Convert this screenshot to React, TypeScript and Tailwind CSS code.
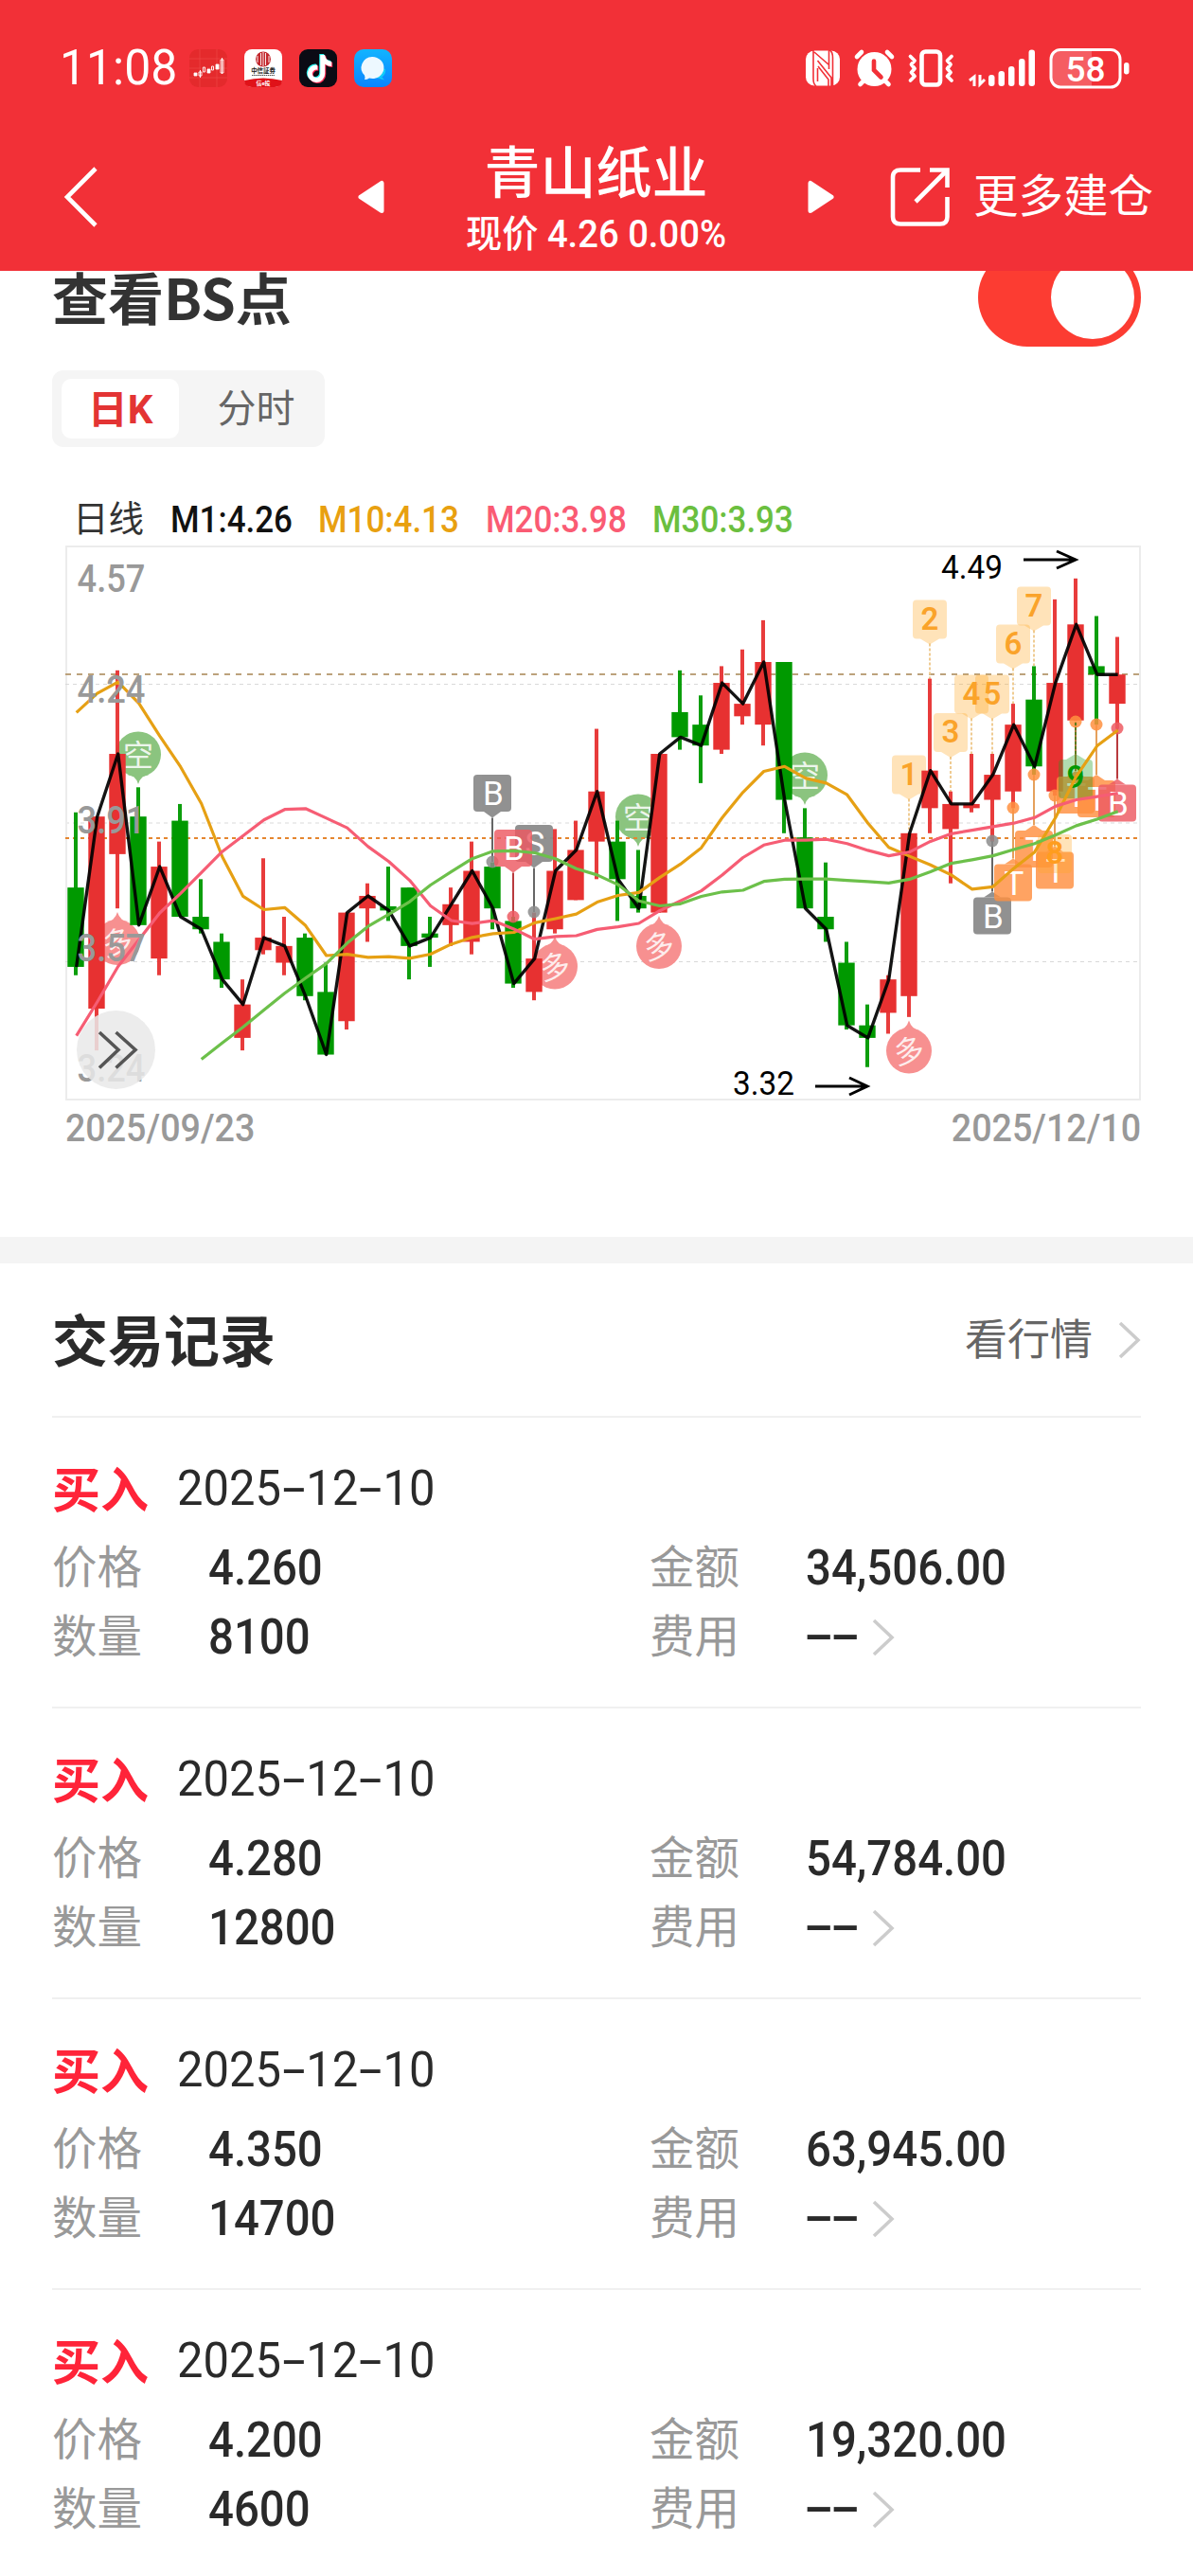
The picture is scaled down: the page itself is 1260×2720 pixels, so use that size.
import { FaTiktok } from "react-icons/fa6"

type Candle = [high: number, open: number, close: number, low: number]

// [high, open, close, low], one entry per trading day
const candles: Candle[] = [
  [3.93, 3.75, 3.56, 3.54], [3.92, 3.46, 3.92, 3.36], [4.27, 3.83, 4.07, 3.7], [3.99, 3.92, 3.66, 3.66],
  [3.86, 3.58, 3.8, 3.54], [3.95, 3.91, 3.68, 3.68], [3.77, 3.68, 3.65, 3.64], [3.64, 3.62, 3.53, 3.51],
  [3.53, 3.39, 3.47, 3.36], [3.82, 3.6, 3.63, 3.59], [3.68, 3.57, 3.61, 3.54], [3.64, 3.63, 3.49, 3.48],
  [3.57, 3.5, 3.35, 3.35], [3.69, 3.43, 3.69, 3.41], [3.76, 3.7, 3.73, 3.62], [3.8, 3.705, 3.695, 3.67],
  [3.75, 3.75, 3.61, 3.53], [3.68, 3.64, 3.63, 3.56], [3.75, 3.66, 3.71, 3.61], [3.86, 3.62, 3.79, 3.59],
  [3.81, 3.8, 3.7, 3.65], [3.68, 3.67, 3.52, 3.51], [3.69, 3.5, 3.58, 3.48], [3.89, 3.65, 3.79, 3.64],
  [3.91, 3.72, 3.84, 3.72], [4.13, 3.86, 3.98, 3.77], [3.91, 3.86, 3.77, 3.67], [3.84, 3.73, 3.7, 3.69],
  [4.07, 3.69, 4.07, 3.69], [4.27, 4.17, 4.11, 4.08], [4.21, 4.14, 4.09, 4.0], [4.28, 4.08, 4.24, 4.07],
  [4.32, 4.16, 4.19, 4.14], [4.39, 4.14, 4.29, 4.09], [4.29, 4.29, 3.96, 3.88], [3.94, 3.87, 3.7, 3.7],
  [3.81, 3.68, 3.65, 3.62], [3.62, 3.57, 3.42, 3.41], [3.47, 3.42, 3.39, 3.32], [3.54, 3.45, 3.53, 3.4],
  [3.88, 3.49, 3.88, 3.44], [4.25, 3.94, 4.03, 3.88], [3.98, 3.89, 3.95, 3.76], [4.07, 3.94, 3.95, 3.93],
  [4.07, 3.96, 4.02, 3.86], [4.19, 3.98, 4.14, 3.94], [4.28, 4.2, 4.04, 4.02], [4.44, 3.98, 4.24, 3.97],
  [4.49, 4.15, 4.38, 4.15], [4.4, 4.28, 4.26, 4.14], [4.35, 4.19, 4.26, 4.13],
]

// averages for the days whose window starts before the first candle
const ma10Head = [4.169, 4.215, 4.242, 4.191, 4.113, 4.039, 3.951, 3.824, 3.729]
const ma20Head = [
  3.395, 3.476, 3.561, 3.625, 3.689, 3.736, 3.786, 3.836, 3.874, 3.912, 3.937, 3.939, 3.916, 3.893, 3.848, 3.812,
  3.767, 3.706, 3.671,
]
const ma30Head = [
  3.339, 3.378, 3.416, 3.457, 3.497, 3.533, 3.568, 3.617, 3.657, 3.686, 3.716, 3.756, 3.788, 3.819, 3.837, 3.838,
  3.833, 3.819, 3.795, 3.78, 3.757, 3.718, 3.706,
]

const cx = (i: number) => 11 + i * 22
const py = (p: number) => 34.8 + (4.49 - p) * 441

const average = (n: number) =>
  candles.slice(n - 1).map((_, i) => candles.slice(i, i + n).reduce((sum, c) => sum + c[2], 0) / n)

const points = (values: number[], start = 0) =>
  values.map((v, i) => `${cx(i + start) + 0.7},${py(v).toFixed(1)}`).join(" ")

const closeLine = points(candles.map((c) => c[2]))
const ma10 = points([...ma10Head, ...average(10)])
const ma20 = points([...ma20Head, ...average(20)])
const ma30 = points([...ma30Head, ...average(30)], 6)

const GREY = "#8c8c8c"
const ROSE = "#ed5a62"
const ORANGE = "#ff9040"

type PinData = { i: number; label: string; color: string; line: string; dot: number; box: number; up?: boolean }

const pins: PinData[] = [
  { i: 20, label: "B", color: GREY, line: "#666", dot: 334, box: 242 },
  { i: 22, label: "S", color: GREY, line: "#666", dot: 387, box: 295 },
  { i: 21, label: "B", color: ROSE, line: "#b83a3e", dot: 392, box: 300 },
  { i: 44, label: "B", color: GREY, line: "#666", dot: 312, box: 371.5, up: true },
  { i: 45, label: "T", color: ORANGE, line: "#e5a05c", dot: 277, box: 336.5, up: true },
  { i: 46, label: "T", color: ORANGE, line: "#e5a05c", dot: 242, box: 301, up: true },
  { i: 47, label: "T", color: ORANGE, line: "#e5a05c", dot: 264, box: 323.5, up: true },
  { i: 48, label: "T", color: ORANGE, line: "#a5763a", dot: 186, box: 244, up: true },
  { i: 49, label: "T", color: ORANGE, line: "#e5a05c", dot: 189, box: 248, up: true },
  { i: 50, label: "B", color: ROSE, line: "#b83a3e", dot: 193, box: 252.5, up: true },
]

const counts = [
  { i: 40, n: 1, top: 221.5, to: 300 },
  { i: 41, n: 2, top: 57.5, to: 141 },
  { i: 42, n: 3, top: 177, to: 260 },
  { i: 43, n: 4, top: 136.5, to: 220 },
  { i: 44, n: 5, top: 136.5, to: 220 },
  { i: 45, n: 6, top: 83.5, to: 167 },
  { i: 46, n: 7, top: 43.5, to: 127 },
]

// tip: the point of the drop, in chart coordinates
const balloons = [
  { i: 3, label: "空", tip: 252 },
  { i: 27, label: "空", tip: 318 },
  { i: 35, label: "空", tip: 274 },
  { i: 2, label: "多", tip: 387 },
  { i: 23, label: "多", tip: 412.5 },
  { i: 28, label: "多", tip: 391 },
  { i: 40, label: "多", tip: 501.5 },
]

const records = [
  { date: ["2025", "12", "10"], price: "4.260", amount: "34,506.00", volume: "8100" },
  { date: ["2025", "12", "10"], price: "4.280", amount: "54,784.00", volume: "12800" },
  { date: ["2025", "12", "10"], price: "4.350", amount: "63,945.00", volume: "14700" },
  { date: ["2025", "12", "10"], price: "4.200", amount: "19,320.00", volume: "4600" },
]

function Pin({ i, label, color, line, dot, box, up }: PinData) {
  const x = cx(i)
  const tip = up ? box - 6 : box + 45.5
  const base = up ? box : box + 39
  return (
    <g>
      <line x1={x} x2={x} y1={dot} y2={tip} stroke={line} strokeWidth="2" />
      <circle cx={x} cy={dot} r="6.5" fill={color} opacity="0.85" />
      <g fill={color} opacity={color === GREY ? 0.95 : 0.82}>
        <rect x={x - 20} y={box} width="40" height="39" rx="4" />
        <path d={`M${x - 9} ${base}L${x} ${tip}L${x + 9} ${base}Z`} />
      </g>
      <text x={x + 1} y={box + 32} fontSize="35" fill="#fff" textAnchor="middle">
        {label}
      </text>
    </g>
  )
}

function Balloon({ i, label, tip }: { i: number; label: string; tip: number }) {
  const x = cx(i)
  const down = label === "空"
  const cy = down ? tip - 31.5 : tip + 32
  const edge = down ? tip - 10 : tip + 10
  return (
    <g fill={down ? "#8bc47f" : "#f79090"}>
      <circle cx={x} cy={cy} r="24" />
      <path d={`M${x - 12} ${edge}Q${x - 3} ${edge} ${x} ${tip}Q${x + 3} ${edge} ${x + 12} ${edge}Z`} />
      <text
        x={x}
        y={cy + 12}
        fontSize="32"
        fill="#fff"
        fillOpacity="0.85"
        textAnchor="middle"
        transform={down ? undefined : `rotate(-12 ${x} ${cy})`}
      >
        {label}
      </text>
    </g>
  )
}

function KLineChart() {
  return (
    <svg className="block h-[588px] w-[1138px]" viewBox="-1 -1 1138 588" fill="none">
      <rect x="1" y="1" width="1134" height="584" stroke="#ececec" strokeWidth="2" />

      <g strokeWidth="1">
        <path d="M0 146.5H1134M0 439.5H1134" stroke="#d9d9d9" strokeDasharray="4 4" />
        <path d="M0 293H1134" stroke="#ececec" strokeWidth="2" strokeDasharray="4 4" />
      </g>

      {balloons.map((b) => (
        <Balloon key={`${b.label}${b.i}`} {...b} />
      ))}

      <path d="M0 136H1134" stroke="#bca27c" strokeWidth="2" strokeDasharray="6 6" />
      <path d="M0 309H1134" stroke="#e5862f" strokeWidth="2" strokeDasharray="4 4" />

      {counts.map(({ i, n, top, to }) => (
        <g key={n}>
          <path d={`M${cx(i)} ${top + 46}V${to}`} stroke="#efcb92" strokeWidth="2" strokeDasharray="3 2" />
          <path
            d={`M${cx(i) - 14} ${top}h28q4 0 4 4v33q0 4-4 4h-4l-10 6l-10-6h-4q-4 0-4-4v-33q0-4 4-4z`}
            fill="#ffa726"
            fillOpacity="0.32"
          />
          <text x={cx(i)} y={top + 31} fontSize="33" fontWeight="600" fill="#faa32a" textAnchor="middle">
            {n}
          </text>
        </g>
      ))}

      {candles.map(([high, open, close, low], i) => {
        const color = close >= open ? "#e73131" : "#009900"
        const top = py(Math.max(open, close))
        return (
          <g key={i} fill={color}>
            <rect x={cx(i) - 2} y={py(high)} width="4" height={py(low) - py(high)} opacity="0.95" />
            <rect x={cx(i) - 8.7} y={top} width="17.4" height={Math.max(4, py(Math.min(open, close)) - top)} />
          </g>
        )
      })}

      {pins.map((p) => (
        <Pin key={p.i} {...p} />
      ))}

      {/* 8 and 9 sit below their candles */}
      <path d="M1031 305h28q4 0 4 4v33q0 4-4 4h-28q-4 0-4-4v-33q0-4 4-4z" fill="#ffa726" fillOpacity="0.32" />
      <text x="1045" y="336" fontSize="33" fontWeight="600" fill="#ff9d1e" textAnchor="middle">
        8
      </text>
      <path d="M1067 187V220" stroke="#5d7a1d" strokeWidth="2" strokeDasharray="3 2" />
      <path
        d="M1053 226h4l10-6l10 6h4q4 0 4 4v33q0 4-4 4h-28q-4 0-4-4v-33q0-4 4-4z"
        fill="#1e9e1e"
        fillOpacity="0.35"
      />
      <text x="1067" y="256" fontSize="33" fontWeight="600" fill="#009900" textAnchor="middle">
        9
      </text>

      <g strokeLinejoin="round">
        <polyline points={closeLine} stroke="#000" strokeOpacity="0.92" strokeWidth="3.4" />
        <polyline points={ma10} stroke="#e6a014" strokeWidth="3.2" />
        <polyline points={ma20} stroke="#f65d74" strokeWidth="3.2" />
        <polyline points={ma30} stroke="#6cc04a" strokeWidth="3.2" />
      </g>

      <g fontSize="40" fontWeight="500" fill="#999">
        <text x="12.5" y="48.5" textLength="72" lengthAdjust="spacingAndGlyphs">4.57</text>
        <text x="12.5" y="165.5" textLength="72" lengthAdjust="spacingAndGlyphs">4.24</text>
        <text x="12.5" y="303.5" textLength="72" lengthAdjust="spacingAndGlyphs">3.91</text>
        <text x="12.5" y="439" textLength="72" lengthAdjust="spacingAndGlyphs">3.57</text>
        <text x="12.5" y="565.5" textLength="72" lengthAdjust="spacingAndGlyphs">3.24</text>
      </g>

      <g fontSize="35" fill="#000">
        <text x="925" y="35" textLength="65" lengthAdjust="spacingAndGlyphs">4.49</text>
        <text x="705" y="579.5" textLength="65" lengthAdjust="spacingAndGlyphs">3.32</text>
      </g>
      <path d="M1012 15H1067M1047 6L1067 15L1047 24M792 571H847M828 562L847 571L828 580" stroke="#000" strokeWidth="3" />

      <circle cx="53.5" cy="532.5" r="41.5" fill="#e9e9e9" fillOpacity="0.85" />
      <path d="M36 514L56 532.5L36 551.5M53.5 514L74 532.5L53.5 551.5" stroke="#555" strokeWidth="3.6" />
    </svg>
  )
}

function StatusIcons() {
  return (
    <svg className="block h-11 w-[344px]" viewBox="850 50 344 44" fill="#fff">
      {/* nfc */}
      <rect x="851" y="53.500" width="36" height="37" rx="9" />
      <path
        d="M859 53V83Q859 89 862 91M860 55L875.500 68.500M863.500 64L878 82V91M863.500 72V86M864 70L875 84V91M875.500 53V73M879.500 91V61Q879.500 55 876.500 53"
        stroke="#f23037"
        strokeWidth="1.600"
        fill="none"
      />
      {/* alarm */}
      <circle cx="923.5" cy="73" r="18" />
      <path d="M905 60l5-5M942 60l-5-5M908.500 89l5-5M938.500 89l-5-5" stroke="#fff" strokeWidth="4.600" strokeLinecap="round" />
      <path d="M923 64.500v9.500l7.500 7.500" stroke="#f23037" strokeWidth="4.600" fill="none" strokeLinecap="round" />
      {/* vibrate */}
      <rect x="973.500" y="54.500" width="19.500" height="35" rx="4" fill="none" stroke="#fff" strokeWidth="4.600" />
      <path
        d="M961.500 59.500l4.500 4.500l-3.500 4l3.500 4.500l-3.500 4l3.500 4l-4.500 4.500M1005 59.500l-4.500 4.500l3.500 4l-3.500 4.500l3.500 4l-3.500 4l4.500 4.500"
        fill="none"
        stroke="#fff"
        strokeWidth="3.800"
        strokeLinecap="round"
        strokeLinejoin="round"
      />
      {/* signal */}
      <path d="M1024 85l5-4v10M1040 84l-5 5V79" fill="none" stroke="#fff" strokeWidth="3" />
      <rect x="1044" y="79" width="6.500" height="12" rx="3" />
      <rect x="1054.500" y="75" width="6.500" height="16" rx="3" />
      <rect x="1065" y="70" width="6.500" height="21" rx="3" />
      <rect x="1076" y="62" width="6.500" height="29" rx="3" />
      <rect x="1086.500" y="52.500" width="6.500" height="38.500" rx="3" />
      {/* battery */}
      <path d="M1153 53h-33q-10 0-10 10v18q0 10 10 10h33z" fillOpacity="0.22" />
      <rect x="1110" y="52.500" width="73" height="39.500" rx="10" fill="none" stroke="#fff" strokeWidth="3" />
      <rect x="1187" y="66" width="5.500" height="12.500" rx="2.700" />
      <text x="1146.500" y="86" fontSize="37" fontWeight="500" textAnchor="middle">
        58
      </text>
    </svg>
  )
}

function AppIcons() {
  return (
    <div className="flex gap-[18px]">
      <svg className="size-10" viewBox="0 0 40 40" fill="none">
        <rect width="40" height="40" rx="9" fill="#e42a2c" />
        <path d="M0 10H40M0 20H40M0 30H40M11 0V40M29 0V40" stroke="#f04a4a" strokeWidth="0.6" />
        <path d="M5 25h3v3H5zM19 21h3v4h-3zM28 16h3v5h-3z" fill="#fff" stroke="#fff" strokeWidth="0.8" />
        <path d="M10 24h3v4h-3zM14.500 19h2v5h-2zM23.500 18h2v4h-2zM33 11h3v14h-3zM11.500 22v8M34.500 9v17" stroke="#fff" strokeWidth="0.9" />
      </svg>
      <svg className="size-10" viewBox="0 0 40 40" fill="none">
        <rect width="40" height="40" rx="8" fill="#fff" />
        <path d="M0 33Q20 28 40 33Q40 40 32 40H8Q0 40 0 33Z" fill="#e01219" />
        <circle cx="20" cy="10.500" r="8" fill="#c3272d" />
        <path d="M17.500 4v13M20 3v15M22.500 4v13M14 7v7M26 7v7" stroke="#fff" strokeWidth="0.9" />
        <text x="20" y="25" fontSize="6.400" fontWeight="700" fill="#222" textAnchor="middle">中信証券</text>
        <path d="M8 27.500H32" stroke="#555" strokeWidth="1" strokeDasharray="1.500 0.600" />
        <text x="20" y="37.500" fontSize="6" fontWeight="700" fill="#fff" textAnchor="middle">信e投</text>
      </svg>
      <div className="relative size-10 rounded-[9px] bg-[#0b0b14]">
        <FaTiktok className="absolute left-[6px] top-[5px] size-[29px] text-[#25f4ee]" />
        <FaTiktok className="absolute left-[8px] top-[7px] size-[29px] text-[#fe2c55]" />
        <FaTiktok className="absolute left-[7px] top-[6px] size-[29px] text-white" />
      </div>
      <svg className="size-10" viewBox="0 0 40 40">
        <defs>
          <linearGradient id="chat" x1="0" y1="0" x2="0" y2="1">
            <stop offset="0" stopColor="#12b4ff" />
            <stop offset="1" stopColor="#0a84ff" />
          </linearGradient>
        </defs>
        <rect width="40" height="40" rx="10" fill="url(#chat)" />
        <path d="M24 30.500a8 8 0 0 0 9-9.500l-4-1l-6 10zM29 29l3 3.500l-5-1.500z" fill="#12cdf9" />
        <path d="M19 8a12 11.500 0 1 1-3 22.500q-2 1.500-5 1.500q1-2 0-4.500A12 11.500 0 0 1 19 8z" fill="#edf8ff" />
      </svg>
    </div>
  )
}

function Header() {
  return (
    <header className="relative z-10 h-[286px] bg-[#f23037] text-white">
      <div className="flex h-[144px] items-center pl-[63px] pr-[66px]">
        <span className="w-[137px] origin-left scale-x-[0.96] text-[52px] leading-none">11:08</span>
        <AppIcons />
        <div className="ml-auto">
          <StatusIcons />
        </div>
      </div>

      <div className="flex h-[128px] items-center pl-[67px]">
        <svg className="h-16 w-9" viewBox="0 0 36 64" fill="none">
          <path d="M34 2L4 32L34 62" stroke="#fff" strokeWidth="4.600" />
        </svg>
        <svg className="ml-[275px] h-9 w-7" viewBox="0 0 28 36">
          <path d="M3 18L25 3.500V32.500Z" fill="#fff" stroke="#fff" strokeWidth="5" strokeLinejoin="round" />
        </svg>
        <div className="w-[447px] pt-[9px] text-center">
          <h1 className="text-[59px] font-medium leading-[70px]">青山纸业</h1>
          <p className="origin-center scale-x-[0.955] whitespace-nowrap text-[40px] font-medium leading-[58px]">
            现价 4.26 0.00%
          </p>
        </div>
        <svg className="h-9 w-7" viewBox="0 0 28 36">
          <path d="M25 18L3 3.500V32.500Z" fill="#fff" stroke="#fff" strokeWidth="5" strokeLinejoin="round" />
        </svg>
        <svg className="ml-[59px] size-16" viewBox="0 0 64 64" fill="none" stroke="#fff" strokeWidth="4.600">
          <path d="M32 3.500H11Q3 3.500 3 11V53Q3 60.500 11 60.500H53Q60.500 60.500 60.500 53V32" />
          <path d="M42 3.500H60.500V22M60 4L27 37" />
        </svg>
        <span className="ml-6 pt-[2px] text-[47.500px] leading-none">更多建仓</span>
      </div>
    </header>
  )
}

function Chevron() {
  return (
    <svg className="h-10 w-6" viewBox="0 0 24 40" fill="none">
      <path d="M2 2L21 20L2 38" stroke="#ccc" strokeWidth="3.600" />
    </svg>
  )
}

// hyphen stretched to the width of a digit
function Dash() {
  return (
    <span className="inline-block w-[28px] text-center">
      <span className="inline-block scale-x-[1.8]">-</span>
    </span>
  )
}

function Value({ children }: { children: React.ReactNode }) {
  return (
    <span className="origin-left scale-x-[0.91] whitespace-nowrap text-[52px] font-medium leading-none">{children}</span>
  )
}

function TradeRecord({ date, price, amount, volume }: (typeof records)[number]) {
  return (
    <li className="h-[307px] border-t-2 border-[#f0f0f0] pt-[40px] text-[#2a2a2a]">
      <div className="flex h-[72px] items-center">
        <span className="w-[132px] pt-[3px] text-[51px] font-bold leading-none text-[#ff2439]">买入</span>
        <span className="origin-left scale-x-[0.94] whitespace-nowrap pb-[3px] text-[52px] font-[450] leading-none">
          {date[0]}
          <Dash />
          {date[1]}
          <Dash />
          {date[2]}
        </span>
      </div>
      <div className="mt-[10px] grid auto-rows-[73px] grid-cols-[165px_466px_165px_1fr] items-center">
        <span className="pt-[3px] text-[47.500px] leading-none text-[#999]">价格</span>
        <Value>{price}</Value>
        <span className="pt-[3px] text-[47.500px] leading-none text-[#999]">金额</span>
        <Value>{amount}</Value>
        <span className="pt-[3px] text-[47.500px] leading-none text-[#999]">数量</span>
        <Value>{volume}</Value>
        <span className="pt-[3px] text-[47.500px] leading-none text-[#999]">费用</span>
        <div className="flex items-center gap-[14px]">
          <span className="whitespace-nowrap pb-[3px] text-[52px] font-medium leading-none">
            <Dash />
            <Dash />
          </span>
          <Chevron />
        </div>
      </div>
    </li>
  )
}

export default function App() {
  return (
    <div className="h-[2720px] w-[1260px] overflow-hidden bg-white font-[Roboto,'Noto_Sans_CJK_SC',sans-serif]">
      <Header />

      <section className="-mt-6 h-[1044px] px-[55px]">
        <div className="flex h-[104px] justify-between">
          <h2 className="pt-[21px] font-['Noto_Sans_CJK_SC',sans-serif] text-[59px] font-bold leading-none text-[#333]">
            查看BS点
          </h2>
          <div className="flex h-[104px] w-[172px] items-center justify-end rounded-full bg-[#fc3c32] pr-[7px]">
            <span className="size-[88px] rounded-full bg-white" />
          </div>
        </div>

        <div className="mt-[25px] flex h-[81px] w-[288px] items-center rounded-xl bg-[#f5f5f5] px-[10px] text-[41px] leading-none">
          <span className="flex h-[63px] w-[124px] items-center justify-center rounded-[10px] bg-white pt-[2px] text-[42px] font-bold text-[#e33434]">
            日K
          </span>
          <span className="flex-1 pl-[19px] pt-[2px] text-center text-[#666]">分时</span>
        </div>

        <div className="mt-[51px] flex h-[52px] items-center pl-[22px] text-[38px] font-medium leading-none text-[#111]">
          <span className="w-[103px] text-[37.500px] font-normal text-[#333]">日线</span>
          <span className="w-[156px] origin-left scale-x-[0.92]">M1:4.26</span>
          <span className="w-[177px] origin-left scale-x-[0.92] text-[#e8a010]">M10:4.13</span>
          <span className="w-[176px] origin-left scale-x-[0.92] text-[#fa5b73]">M20:3.98</span>
          <span className="origin-left scale-x-[0.92] text-[#6bbf3f]">M30:3.93</span>
        </div>

        <div className="ml-[13px]">
          <KLineChart />
        </div>
        <div className="ml-[14px] mt-[9px] flex justify-between text-[40px] font-medium leading-none text-[#999]">
          <span className="origin-left scale-x-[0.94]">2025/09/23</span>
          <span className="origin-right scale-x-[0.94]">2025/12/10</span>
        </div>
      </section>

      <div className="h-[28px] bg-[#f4f4f4]" />

      <section className="px-[55px]">
        <div className="flex h-[161px] items-center justify-between">
          <h2 className="pt-[5px] text-[59px] font-bold leading-none text-[#2a2a2a]">交易记录</h2>
          <div className="flex items-center gap-[27px]">
            <span className="pt-[2px] text-[45px] leading-none text-[#666]">看行情</span>
            <Chevron />
          </div>
        </div>
        <ul>
          {records.map((r) => (
            <TradeRecord key={r.amount} {...r} />
          ))}
        </ul>
      </section>
    </div>
  )
}
